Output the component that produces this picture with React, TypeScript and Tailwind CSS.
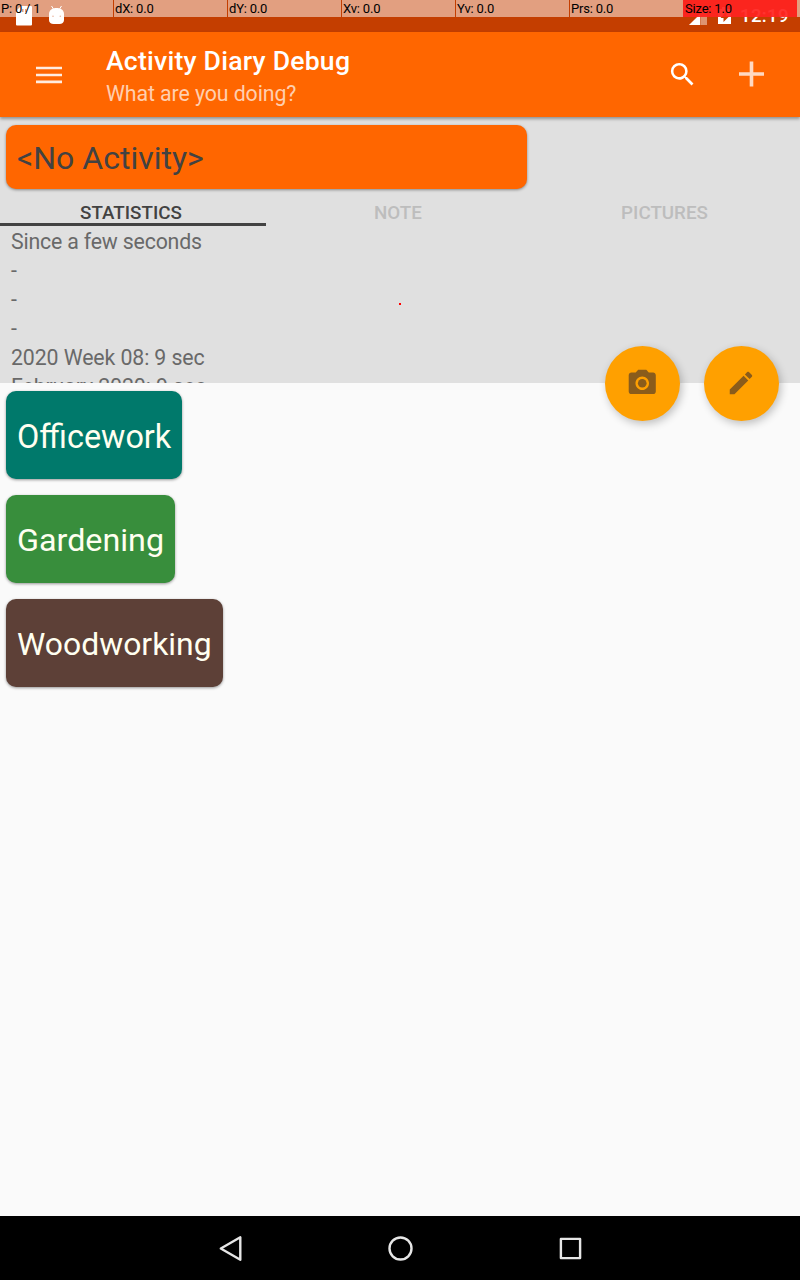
import React from "react";

const pointerCells = ["P: 0 / 1", "dX: 0.0", "dY: 0.0", "Xv: 0.0", "Yv: 0.0", "Prs: 0.0"];

const stats = [
  "Since a few seconds",
  "-",
  "-",
  "-",
  "2020 Week 08: 9 sec",
  "February 2020: 9 sec",
];

const activities = [
  { name: "Officework", style: "w-[176px] bg-[#00796b] pt-[4px] text-[32.400px]" },
  { name: "Gardening", style: "w-[169px] bg-[#388e3c] pt-[2px] text-[32.250px]" },
  { name: "Woodworking", style: "w-[217px] bg-[#5d4037] pt-[3px] text-[31.900px]" },
];

function StatusBar() {
  return (
    <div className="relative h-8 shrink-0 bg-[#c43e00]">
      <div className="flex h-8 items-center justify-between">
        <svg width="80" height="32" viewBox="0 0 80 32" fill="#fff">
          <path d="M21 6h10a1 1 0 0 1 1 1v17.500a1 1 0 0 1-1 1H17a1 1 0 0 1-1-1V11zM22 9v3h1.500v-3zm3 0v3h1.500v-3z" fillRule="evenodd" />
          <path d="M51.500 6l2 3M61.500 6l-2 3" stroke="#fff" strokeWidth="1" />
          <path d="M49 14c0-4 3.500-6 7.500-6s7.500 2 7.500 6v6c0 2.500-2 4-4.500 4h-6c-2.500 0-4.500-1.500-4.500-4z" />
          <circle cx="53" cy="16.300" r=".8" fill="#d56a3c" />
          <circle cx="60.300" cy="16.300" r=".8" fill="#d56a3c" />
        </svg>
        <div className="flex h-8 items-center pr-[11px]">
          <svg width="54" height="32" viewBox="0 0 54 32" className="shrink-0">
            <path d="M22 6v19H4z" fill="#fff" fillOpacity=".3" />
            <path d="M16 16h6v9h-6z" fill="#fff" fillOpacity=".2" />
            <path d="M15 14.500V25H4z" fill="#fff" />
            <path d="M37 7v2h-4v15h13V9h-4V7zM41.500 11v5h3l-6 6v-4h-3z" fill="#fff" fillRule="evenodd" />
          </svg>
          <span className="ml-[1px] w-[49px] whitespace-nowrap text-[18.600px] leading-8 font-medium tracking-[0.350px] text-white">12:19</span>
        </div>
      </div>
      <div className="absolute inset-x-0 top-0 flex h-[17px] text-[13px] leading-[17px] tracking-[-0.200px] text-black">
        {pointerCells.map((c) => (
          <div key={c} className="mr-px w-[113px] shrink-0 bg-white/50 pl-[1px] whitespace-pre">
            {c}
          </div>
        ))}
        <div className="-ml-px w-[114px] shrink-0 bg-[#ff2420]/93 pl-[2px]">Size: 1.0</div>
        <div className="flex-1 bg-white/50" />
      </div>
    </div>
  );
}

function AppBar() {
  return (
    <header className="z-10 flex h-[85px] shrink-0 items-center bg-[#ff6600] shadow-[0_2px_3px_rgba(0,0,0,0.35)]">
      <svg width="26" height="18" viewBox="0 0 26 18" className="ml-9 shrink-0">
        <path d="M0 2h26M0 9h26M0 15.800h26" stroke="#fff" strokeOpacity=".88" strokeWidth="2.700" />
      </svg>
      <div className="ml-11 flex-1 pt-[5px]">
        <h1 className="text-[26.600px] leading-[33px] font-medium tracking-[0.220px] text-white">Activity Diary Debug</h1>
        <p className="text-[21.300px] leading-[33px] tracking-[-0.080px] text-white/70">What are you doing?</p>
      </div>
      <svg width="31" height="31" viewBox="0 0 24 24" className="mr-[41px] shrink-0" fill="#fff">
        <path d="M15.500 14h-.79l-.28-.27A6.471 6.471 0 0 0 16 9.500 6.500 6.500 0 1 0 9.500 16c1.610 0 3.090-.59 4.230-1.570l.27.28v.79l5 4.990L20.490 19l-4.990-5zm-6 0C7.010 14 5 11.990 5 9.500S7.010 5 9.500 5 14 7.010 14 9.500 11.990 14 9.500 14z" />
      </svg>
      <svg width="26" height="26" viewBox="0 0 26 26" className="mr-[35px] mb-[2px] shrink-0">
        <path d="M0 13h25M12.500 .5v25" stroke="#ffd9c2" strokeWidth="3.600" />
      </svg>
    </header>
  );
}

function CurrentActivity() {
  return (
    <section className="relative flex h-[266px] shrink-0 flex-col bg-[#e0e0e0]">
      <div className="mt-2 ml-1.5 flex h-16 w-[521px] shrink-0 items-center rounded-[10px] bg-[#ff6600] pt-[2px] pl-[11px] text-[32px] text-[#424242] shadow-[0_1px_3px_rgba(0,0,0,0.4)]">
        &lt;No Activity&gt;
      </div>
      <div className="grid h-[37px] shrink-0 grid-cols-[266px_266px_268px] grid-rows-[37px] text-center text-[18.800px] leading-[20px] font-medium">
        <div className="border-b-[3px] border-[#424242] pt-[14px] pr-1 text-[#424242]">STATISTICS</div>
        <div className="pt-[14px] pr-[2px] text-[#bdbdbd]">NOTE</div>
        <div className="pt-[14px] pr-[3px] text-[#bdbdbd]">PICTURES</div>
      </div>
      <div className="min-h-0 flex-1 overflow-hidden pt-[1px] pl-[11px] text-[21.300px] leading-[29px] tracking-[-0.100px] text-[#696969] first-line:tracking-[-0.180px]">
        {stats.map((s, i) => (
          <div key={i}>{s}</div>
        ))}
      </div>
      <span className="absolute top-[186px] left-[399px] size-[2px] bg-[#ff0000]" />
      <div className="absolute top-[229px] right-[21px] flex gap-6">
        <button className="flex size-[75px] items-center justify-center rounded-full bg-[#ffa000] pr-[1px] pb-[1px] shadow-[2px_3px_8px_rgba(0,0,0,0.24)]">
          <svg width="32.500" height="32.500" viewBox="0 0 24 24" fill="#8a5c1b">
            <circle cx="12" cy="12" r="3.200" />
            <path d="M9 2L7.170 4H4c-1.100 0-2 .9-2 2v12c0 1.100.9 2 2 2h16c1.100 0 2-.9 2-2V6c0-1.100-.9-2-2-2h-3.170L15 2H9zm3 15c-2.760 0-5-2.240-5-5s2.240-5 5-5 5 2.240 5 5-2.240 5-5 5z" />
          </svg>
        </button>
        <button className="flex size-[75px] items-center justify-center rounded-full bg-[#ffa000] pr-[2px] pb-[2px] shadow-[2px_3px_8px_rgba(0,0,0,0.24)]">
          <svg width="30" height="30" viewBox="0 0 24 24" fill="#8a5c1b">
            <path d="M3 17.250V21h3.750L17.810 9.940l-3.750-3.750L3 17.250zM20.710 7.040c.39-.39.39-1.020 0-1.410l-2.340-2.340c-.39-.39-1.020-.39-1.410 0l-1.830 1.830 3.750 3.750 1.830-1.830z" />
          </svg>
        </button>
      </div>
    </section>
  );
}

function NavBar() {
  return (
    <nav className="flex h-16 shrink-0 items-center justify-center gap-[138px] bg-black">
      <svg width="32" height="32" viewBox="0 0 32 32" fill="none" stroke="#e6e6e6" strokeWidth="2.400" strokeLinejoin="round">
        <path d="M26.300 5.300v22.400L6.800 16.500z" />
      </svg>
      <svg width="32" height="32" viewBox="0 0 32 32" fill="none" stroke="#e6e6e6" strokeWidth="2.400">
        <circle cx="16.500" cy="16.500" r="11" />
      </svg>
      <svg width="32" height="32" viewBox="0 0 32 32" fill="none" stroke="#e6e6e6" strokeWidth="2.400" strokeLinejoin="round">
        <path d="M6.900 6.900h19.200v19.200H6.900z" />
      </svg>
    </nav>
  );
}

export default function App() {
  return (
    <div className="flex h-[1280px] w-[800px] flex-col overflow-hidden bg-[#fafafa] font-[Roboto,sans-serif]">
      <StatusBar />
      <AppBar />
      <CurrentActivity />
      <main className="flex flex-1 flex-col items-start gap-4 pt-2 pl-1.5">
        {activities.map((a) => (
          <div
            key={a.name}
            className={`flex h-[88px] items-center rounded-[10px] pl-[11px] text-[#fffff0] shadow-[0_1px_3px_rgba(0,0,0,0.4)] ${a.style}`}
          >
            {a.name}
          </div>
        ))}
      </main>
      <NavBar />
    </div>
  );
}
